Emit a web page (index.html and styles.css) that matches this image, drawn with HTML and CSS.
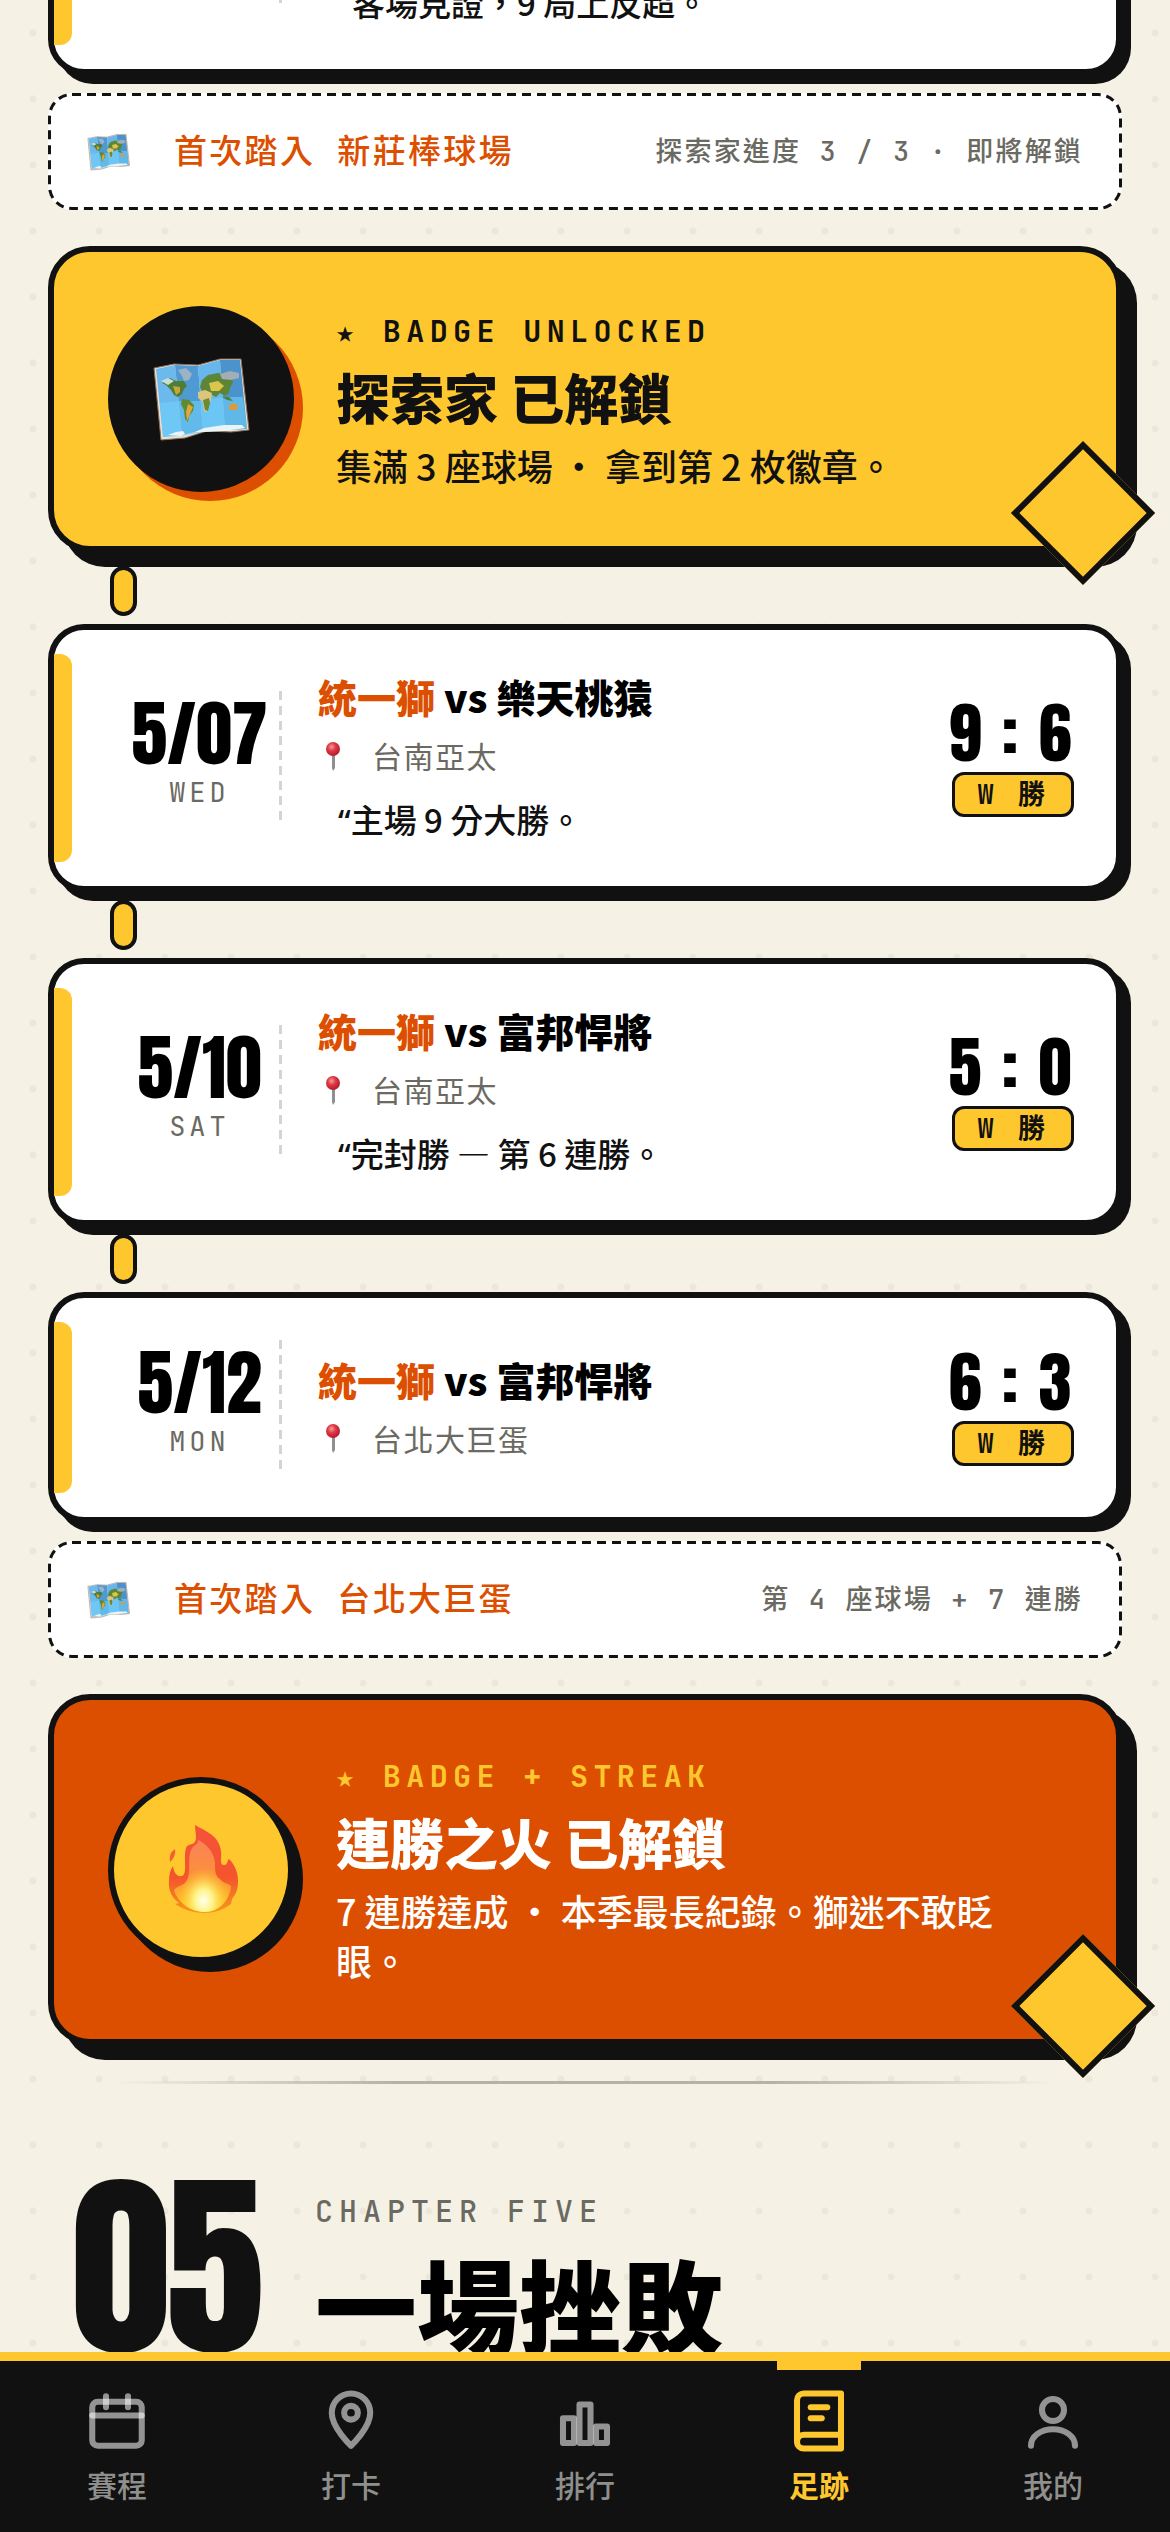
FILE: index.html
```html
<!DOCTYPE html>
<html lang="zh-Hant">
<head>
  <meta charset="UTF-8" />
  <meta name="viewport" content="width=device-width, initial-scale=1" />
  <title>足跡</title>
  <link rel="stylesheet" href="styles.css">
</head>
<body>
  <svg class="sprite" aria-hidden="true">
    <defs>
      <linearGradient id="fireBody" x1="0" y1="0" x2="0" y2="1">
        <stop offset="0" stop-color="#f4523a" />
        <stop offset="0.6" stop-color="#f4552c" />
        <stop offset="1" stop-color="#f59a1c" />
      </linearGradient>
      <linearGradient id="fireInner" x1="0" y1="0" x2="0" y2="1">
        <stop offset="0" stop-color="#fb8158" />
        <stop offset="0.55" stop-color="#fc9238" />
        <stop offset="1" stop-color="#ffd21e" />
      </linearGradient>
      <radialGradient id="fireCore" cx="0.52" cy="0.84" r="0.45">
        <stop offset="0" stop-color="#fffff0" />
        <stop offset="0.35" stop-color="#fff48a" />
        <stop offset="1" stop-color="#ffd21e" stop-opacity="0" />
      </radialGradient>
      <radialGradient id="pinHead" cx="0.4" cy="0.35" r="0.6">
        <stop offset="0" stop-color="#f79a9a" />
        <stop offset="0.5" stop-color="#dd3842" />
        <stop offset="1" stop-color="#b81f30" />
      </radialGradient>
    </defs>

    <symbol id="map" viewBox="12 10 98 86">
      <path d="M14 22 34 18l24 1 22-6 21 0 8 71-18 2-24-1-22 7-24 2z" fill="#e9e0d4" stroke="#8a6a55" stroke-width="1" />
      <path d="M16 23 35 19l7 70-19 2z" fill="#6cb9ee" />
      <path d="M35 19l23 1 5 64-21 5z" fill="#4f9ad2" />
      <path d="M58 20l22-6 5 70-22 2z" fill="#67b6ee" />
      <path d="M80 14l20 0 7 69-22 1z" fill="#4a93cc" />
      <path d="M20 57l20-2 22 0 20-4 21 0 4 32-22 1-22 2-21 4-19 1z" fill="#6fd0fa" opacity="0.6" />
      <path d="M38 24l8-2 6 6-3 6-5 1-2-5z" fill="#9eb2c6" />
      <path d="M22 37l8-5 6 3 8 0 3 5-3 3-2 5-4 3-4-2-3-5-5-5z" fill="#4f7d35" />
      <path d="M33 40l7 1 0 5-4 3z" fill="#c5a640" />
      <path d="M21 35l7-3 6 3-6 4z" fill="#c9dcd8" />
      <path d="M42 53l7 1 5 5-1 6-4 5-1 6-3-3-1-9-3-6z" fill="#5f8a2e" />
      <path d="M48 58l5 3-3 7-3 7-1-9z" fill="#e0a83c" />
      <path d="M60 41l2-7 6-5 10-2 13 3 2 6-3 6-1 5-4 3-5-3-4 4-4-2-9-2z" fill="#5c8635" />
      <path d="M58 46l7-2 7 3-1 7-3 6-1 6-3-1-1-9-5-4z" fill="#dec57d" />
      <path d="M69 37l9-2 6 5-5 5-8 0z" fill="#d9c64b" />
      <path d="M63 54l6-2 1 5-2 8-3-1z" fill="#6d8a2e" />
      <path d="M80 28l10-3 9 2 0 5-8 2-9-1z" fill="#a3adb5" />
      <path d="M88 60l6-3 4 3-1 4-7 0z" fill="#dd9a3e" />
      <path d="M82 51l5 3 6 1-4-4z" fill="#51803a" />
      <path d="M28 89l8-3 7-1 2 3-4 2zM55 86l9-4 20-3 18 0 3 3-20 3-21 1z" fill="#e9f3f8" />
    </symbol>

    <symbol id="fire" viewBox="-4 2 110 120">
      <path d="M45 17c10 6 24 10 26 26 1 7-2 14 3 14 4 0 3-5 5-6 6 6 9 14 9 22 0 8-2 13-6 18l-1 5c-8 6-17 9-26 9-11 0-21-3-30-9l4-1c-7-5-11-13-10-22 0-6 1-11 4-15 1 7 4 11 9 10 6-2 1-18 4-28 3-6 9-1 10-10 0-5-1-8-1-13z" fill="url(#fireBody)" />
      <path d="M48 32c7 3 16 11 17 23 0 7 0 13 5 16 4 5 6 3 11 7-1 14-12 26-26 26-14 0-27-9-31-22 5-6 9-3 13-10 5-9-1-25 6-33 3-3 5-3 5-7z" fill="url(#fireInner)" />
      <path d="M48 32c7 3 16 11 17 23 0 7 0 13 5 16 4 5 6 3 11 7-1 14-12 26-26 26-14 0-27-9-31-22 5-6 9-3 13-10 5-9-1-25 6-33 3-3 5-3 5-7z" fill="url(#fireCore)" />
      <path d="M25 41c1 6-2 10-5 13-1-7 1-10 5-13z" fill="#f0622f" />
    </symbol>

    <symbol id="pin" viewBox="0 0 30 30">
      <path d="M14 13h3v14l-2 3-1-3z" fill="#8d8f93" />
      <circle cx="15" cy="8" r="7" fill="url(#pinHead)" />
    </symbol>
  </svg>

  <main class="feed">
    <article class="game">
      <div class="game-date"></div>
      <div class="game-body game-body-end">
        <p class="note">客場見證，9 局上反超。</p>
      </div>
    </article>

    <div class="first-visit">
      <svg class="first-visit-icon" aria-hidden="true"><use href="#map" /></svg>
      <strong>首次踏入 新莊棒球場</strong>
      <span>探索家進度 3 / 3 · 即將解鎖</span>
    </div>

    <section class="badge">
      <div class="badge-icon"><svg aria-hidden="true"><use href="#map" /></svg></div>
      <div class="badge-text">
        <p class="badge-label">★ BADGE UNLOCKED</p>
        <h2>探索家 已解鎖</h2>
        <p class="badge-desc">集滿 3 座球場 ・ 拿到第 2 枚徽章。</p>
      </div>
    </section>

    <div class="link link-badge"></div>

    <article class="game">
      <div class="game-date"><b>5/07</b><span>WED</span></div>
      <div class="game-body">
        <h3><em>統一獅</em> vs 樂天桃猿</h3>
        <p class="place"><svg aria-hidden="true"><use href="#pin" /></svg>台南亞太</p>
        <p class="note"><span class="quote">“</span>主場 9 分大勝。</p>
      </div>
      <div class="game-score"><b>9 : 6</b><span class="result">W 勝</span></div>
    </article>

    <div class="link"></div>

    <article class="game">
      <div class="game-date"><b>5/10</b><span>SAT</span></div>
      <div class="game-body">
        <h3><em>統一獅</em> vs 富邦悍將</h3>
        <p class="place"><svg aria-hidden="true"><use href="#pin" /></svg>台南亞太</p>
        <p class="note"><span class="quote">“</span>完封勝 — 第 6 連勝。</p>
      </div>
      <div class="game-score"><b>5 : 0</b><span class="result">W 勝</span></div>
    </article>

    <div class="link"></div>

    <article class="game">
      <div class="game-date"><b>5/12</b><span>MON</span></div>
      <div class="game-body">
        <h3><em>統一獅</em> vs 富邦悍將</h3>
        <p class="place"><svg aria-hidden="true"><use href="#pin" /></svg>台北大巨蛋</p>
      </div>
      <div class="game-score"><b>6 : 3</b><span class="result">W 勝</span></div>
    </article>

    <div class="first-visit">
      <svg class="first-visit-icon" aria-hidden="true"><use href="#map" /></svg>
      <strong>首次踏入 台北大巨蛋</strong>
      <span>第 4 座球場 + 7 連勝</span>
    </div>

    <section class="badge badge-streak">
      <div class="badge-icon"><svg aria-hidden="true"><use href="#fire" /></svg></div>
      <div class="badge-text">
        <p class="badge-label">★ BADGE + STREAK</p>
        <h2>連勝之火 已解鎖</h2>
        <p class="badge-desc">7 連勝達成 ・ 本季最長紀錄。獅迷不敢眨眼。</p>
      </div>
    </section>

    <hr class="divider" />

    <header class="chapter">
      <div class="chapter-number">05</div>
      <div>
        <p class="chapter-label">CHAPTER FIVE</p>
        <h1>一場挫敗</h1>
      </div>
    </header>
  </main>

  <nav class="tabs">
    <a href="#schedule">
      <svg viewBox="0 0 24 24" aria-hidden="true"><rect x="3" y="5" width="18" height="16" rx="2" /><path d="M3 10h18" /><path d="M8 3v4" /><path d="M16 3v4" /></svg>
      賽程
    </a>
    <a href="#checkin">
      <svg viewBox="0 0 24 24" aria-hidden="true"><path d="M12 21s7-6.500 7-12a7 7 0 1 0-14 0c0 5.500 7 12 7 12z" /><circle cx="12" cy="9" r="2.500" /></svg>
      打卡
    </a>
    <a href="#ranking">
      <svg viewBox="0 0 24 24" aria-hidden="true"><rect x="4" y="11" width="4" height="9" /><rect x="10" y="6" width="4" height="14" /><rect x="16" y="14" width="4" height="6" /></svg>
      排行
    </a>
    <a href="#footprints" class="active" aria-current="page">
      <svg viewBox="0 0 24 24" aria-hidden="true"><path d="M4 19.500A2.500 2.500 0 0 1 6.500 17H20" /><path d="M6.500 2H20v20H6.500A2.500 2.500 0 0 1 4 19.500v-15A2.500 2.500 0 0 1 6.500 2z" /><path d="M9 7h6" /><path d="M9 11h4" /></svg>
      足跡
    </a>
    <a href="#me">
      <svg viewBox="0 0 24 24" aria-hidden="true"><circle cx="12" cy="8" r="4" /><path d="M4 21c0-3.500 3.600-6 8-6s8 2.500 8 6" /></svg>
      我的
    </a>
  </nav>
</body>
</html>
```
FILE: styles.css
```css
:root {
  --ink: #111111;
  --yellow: #ffc72e;
  --orange: #dc4f00;
  --paper: #f5f1e4;
  --muted: #6b6a62;
  --font-zh: "Noto Sans CJK TC", sans-serif;
  --font-mono: "JetBrains Mono", "DejaVu Sans Mono", "Noto Sans CJK TC", monospace;
  --font-number: "Anton", "Liberation Sans Narrow", "Liberation Sans", sans-serif;
}

*,
*::before,
*::after {
  box-sizing: border-box;
  margin: 0;
  padding: 0;
}

body {
  background-color: var(--paper);
  background-image: radial-gradient(circle, #ebe7db 3px, transparent 4px);
  background-size: 66px 66px;
  color: var(--ink);
  font-family: var(--font-zh);
  overflow: hidden;
}

.sprite {
  position: absolute;
  width: 0;
  height: 0;
}

.feed {
  margin-top: -193px;
  padding: 0 48px;
}

/* game card */
.game {
  position: relative;
  display: flex;
  align-items: center;
  gap: 36px;
  padding: 42px 42px 42px 63px;
  background: #fff;
  border: 6px solid var(--ink);
  border-radius: 36px;
  box-shadow: 9px 9px 0 var(--ink);
}

.game::before {
  content: "";
  position: absolute;
  left: 0;
  top: 24px;
  bottom: 24px;
  width: 18px;
  background: var(--yellow);
  border-radius: 0 12px 12px 0;
}

.game-date {
  display: flex;
  flex-direction: column;
  align-items: center;
  width: 165px;
  height: 135px;
  background: repeating-linear-gradient(#d4d4d4 0 9px, transparent 9px 15px) right / 3px 100% no-repeat;
}

.game-date b {
  font-family: var(--font-number);
  font-size: 72px;
  font-weight: 400;
  line-height: 86px;
  color: #000;
}

.game-date span {
  font-family: var(--font-mono);
  font-size: 27px;
  line-height: 30px;
  letter-spacing: 0.15em;
  color: var(--muted);
}

.game-body {
  flex: 1;
}

.game-body-end {
  padding-top: 122px;
}

.game-body h3 {
  font-size: 39px;
  font-weight: 900;
  line-height: 48px;
  color: #000;
}

.game-body em {
  font-style: normal;
  color: var(--orange);
}

.place {
  display: flex;
  align-items: center;
  gap: 24px;
  margin-top: 13px;
  font-size: 30px;
  line-height: 45px;
  letter-spacing: 0.05em;
  color: var(--muted);
}

.place svg {
  width: 30px;
  height: 30px;
}

.note {
  margin-top: 16px;
  padding-left: 20px;
  font-size: 33px;
  font-weight: 500;
  line-height: 50px;
}

.game-body-end .note {
  margin-top: 0;
  padding-left: 34px;
}

.quote {
  font-family: "Noto Sans", sans-serif;
  line-height: 1;
}

.game-score {
  display: flex;
  flex-direction: column;
  align-items: flex-end;
  gap: 6px;
}

.game-score b {
  font-family: var(--font-number);
  font-size: 66px;
  font-weight: 400;
  line-height: 66px;
  letter-spacing: 0.04em;
  color: #000;
}

.result {
  padding: 0 22px;
  background: var(--yellow);
  border: 3px solid var(--ink);
  border-radius: 12px;
  font-family: var(--font-mono);
  font-size: 27px;
  font-weight: 700;
  line-height: 39px;
  letter-spacing: 0.15em;
}

/* pill that joins two cards */
.link {
  width: 27px;
  height: 50px;
  margin: 8px 0 8px 62px;
  background: var(--yellow);
  border: 4px solid var(--ink);
  border-radius: 14px;
}

.link-badge {
  margin-top: 14px;
}

.first-visit {
  display: flex;
  align-items: center;
  gap: 44px;
  margin: 18px 0 36px;
  padding: 33px 39px;
  background: #fff url("data:image/svg+xml,%3Csvg xmlns='http://www.w3.org/2000/svg'%3E%3Crect width='100%25' height='100%25' rx='24' fill='none' stroke='%23111' stroke-width='6' stroke-dasharray='9 6'/%3E%3C/svg%3E");
  border-radius: 24px;
  font-family: var(--font-mono);
  line-height: 51px;
}

.first-visit-icon {
  width: 43px;
  height: 38px;
}

.first-visit strong {
  font-size: 33px;
  font-weight: 500;
  letter-spacing: 0.07em;
  color: var(--orange);
}

.first-visit span {
  margin-left: auto;
  font-size: 27px;
  font-weight: 500;
  letter-spacing: 0.08em;
  color: var(--muted);
}

/* badge banner */
.badge {
  position: relative;
  display: flex;
  align-items: center;
  gap: 42px;
  padding: 54px;
  background: var(--yellow);
  border: 6px solid var(--ink);
  border-radius: 42px;
  box-shadow: 15px 15px 0 var(--ink);
}

.badge::after {
  content: "";
  position: absolute;
  right: -18px;
  bottom: -18px;
  width: 102px;
  height: 102px;
  background: var(--yellow);
  border: 6px solid var(--ink);
  transform: rotate(45deg);
}

.badge-icon {
  display: flex;
  flex: none;
  align-items: center;
  justify-content: center;
  width: 186px;
  height: 186px;
  background: var(--ink);
  border: 6px solid var(--ink);
  border-radius: 50%;
  box-shadow: 9px 9px 0 var(--orange);
}

.badge-icon svg {
  width: 98px;
  height: 86px;
}

.badge-label {
  font-family: var(--font-mono);
  font-size: 30px;
  font-weight: 700;
  line-height: 45px;
  letter-spacing: 0.18em;
}

.badge h2 {
  margin: 10px 0;
  font-size: 54px;
  font-weight: 900;
  line-height: 66px;
}

.badge-desc {
  font-size: 36px;
  font-weight: 500;
  line-height: 50px;
}

.badge-streak {
  background: var(--orange);
  color: #fff;
}

.badge-streak .badge-icon {
  background: var(--yellow);
  box-shadow: 9px 9px 0 var(--ink);
}

.badge-streak .badge-icon svg {
  width: 110px;
  height: 120px;
}

.badge-streak .badge-label {
  color: var(--yellow);
}

.divider {
  height: 3px;
  margin: 36px 66px 0;
  border: 0;
  background: linear-gradient(90deg, transparent, #b5b2a8 30%, #b5b2a8 70%, transparent);
}

.chapter {
  display: flex;
  align-items: flex-start;
  gap: 36px;
  padding: 105px 24px 0;
}

.chapter-number {
  min-width: 207px;
  font-family: var(--font-number);
  font-size: 198px;
  line-height: 156px;
  letter-spacing: -0.02em;
}

.chapter-label {
  font-family: var(--font-mono);
  font-size: 30px;
  font-weight: 500;
  line-height: 45px;
  letter-spacing: 0.2em;
  color: var(--muted);
}

.chapter h1 {
  margin-top: 8px;
  font-size: 102px;
  font-weight: 900;
  line-height: 122px;
  color: #000;
}

/* bottom tab bar */
.tabs {
  position: fixed;
  left: 0;
  right: 0;
  bottom: 0;
  display: flex;
  height: 180px;
  background: var(--ink);
  border-top: 9px solid var(--yellow);
}

.tabs a {
  position: relative;
  display: flex;
  flex: 1;
  flex-direction: column;
  align-items: center;
  gap: 9px;
  padding-top: 27px;
  color: #8f8f8d;
  font-size: 30px;
  font-weight: 500;
  line-height: 42px;
  text-decoration: none;
}

.tabs svg {
  width: 66px;
  height: 66px;
  fill: none;
  stroke: rgba(255, 255, 255, 0.55);
  stroke-width: 2.2;
  stroke-linecap: round;
  stroke-linejoin: round;
}

.tabs .active {
  color: var(--yellow);
  font-weight: 700;
}

.tabs .active svg {
  stroke: var(--yellow);
}

.tabs .active::before {
  content: "";
  position: absolute;
  top: 0;
  left: 50%;
  width: 84px;
  height: 9px;
  margin-left: -42px;
  background: var(--yellow);
}
```
